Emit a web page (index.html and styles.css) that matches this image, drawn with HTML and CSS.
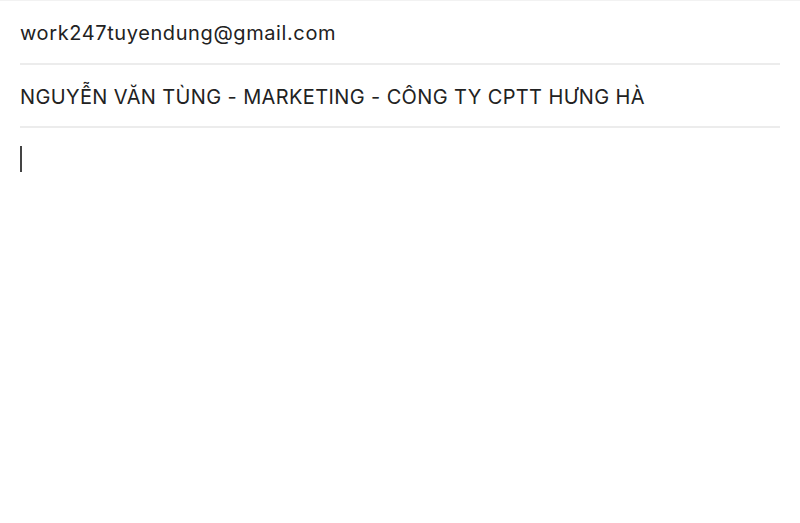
FILE: index.html
```html
<!DOCTYPE html>
<html lang="vi">
<head>
<meta charset="utf-8">
<link rel="stylesheet" href="styles.css">
</head>
<body>
<div class="compose">
  <div class="field field-to">work247tuyendung@gmail.com</div>
  <div class="field field-subject">NGUYỄN VĂN TÙNG - MARKETING - CÔNG TY CPTT HƯNG HÀ</div>
  <div class="body"><span class="caret"></span></div>
</div>
</body>
</html>
```
FILE: styles.css
```css
html, body {
  margin: 0;
  padding: 0;
  background: #ffffff;
}
.compose {
  width: 800px;
  height: 523px;
  box-sizing: border-box;
  border-top: 1px solid #f2f2f2;
  padding: 0 20px;
  font-family: Inter, Roboto, "Noto Sans", sans-serif;
  color: #222222;
}
.field {
  display: flex;
  align-items: center;
  font-size: 20px;
  border-bottom: 2px solid #ececec;
  box-sizing: border-box;
  height: 63px;
  padding-top: 2px;
}
.field-to {
  height: 64px;
  letter-spacing: 0.6px;
}
.field-subject {
  letter-spacing: 0.38px;
}
.body {
  padding-top: 18px;
}
.caret {
  display: block;
  width: 2px;
  height: 26px;
  background: #444444;
}
```
